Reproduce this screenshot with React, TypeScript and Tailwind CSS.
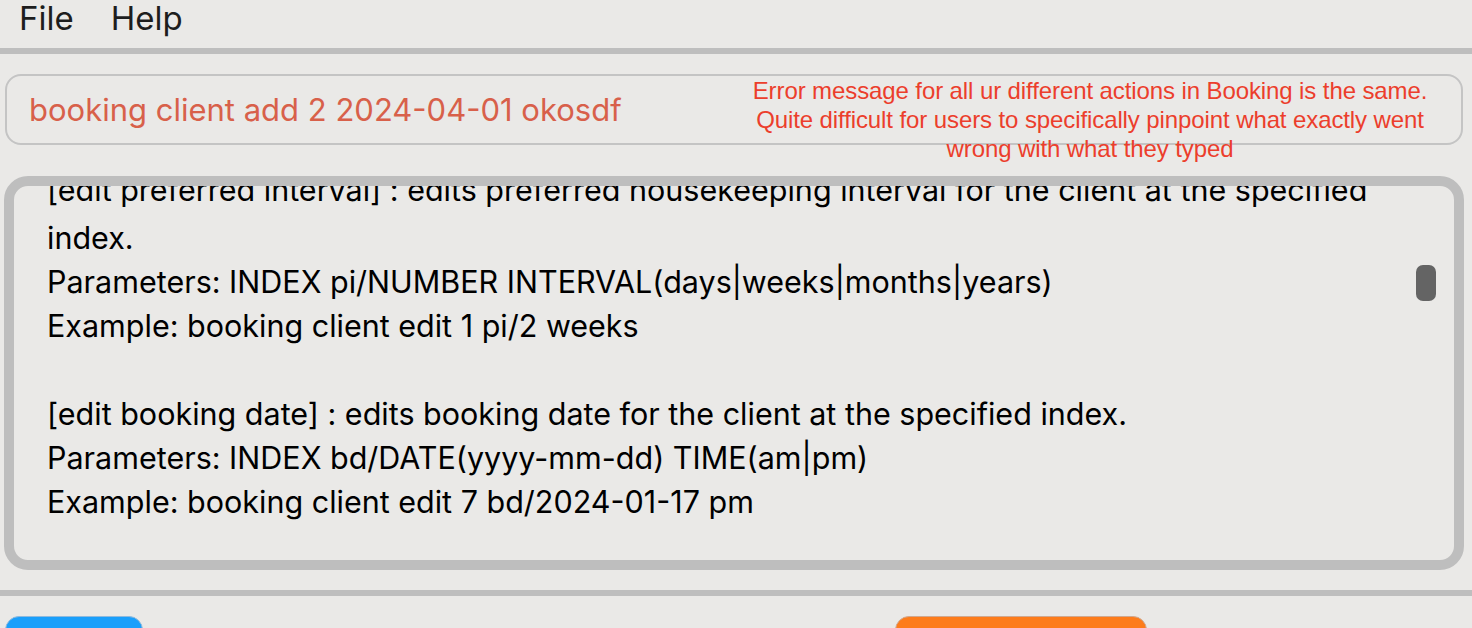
import React from "react";

const resultLines = [
  "[edit preferred interval] : edits preferred housekeeping interval for the client at the specified",
  "index.",
  "Parameters: INDEX pi/NUMBER INTERVAL(days|weeks|months|years)",
  "Example: booking client edit 1 pi/2 weeks",
  "",
  "[edit booking date] : edits booking date for the client at the specified index.",
  "Parameters: INDEX bd/DATE(yyyy-mm-dd) TIME(am|pm)",
  "Example: booking client edit 7 bd/2024-01-17 pm",
];

export default function App() {
  return (
    <div className="flex h-[628px] w-[1472px] flex-col overflow-hidden bg-[#eae9e7] font-['Inter',sans-serif] text-black">
      {/* menu bar */}
      <div className="flex h-[48px] shrink-0 items-start gap-[37px] pl-[19px] text-[33px] leading-[36px] text-[#1d1d1d]">
        <span>File</span>
        <span>Help</span>
      </div>
      <div className="h-[6px] shrink-0 bg-[#bebebe]" />

      {/* command box */}
      <div className="shrink-0 pl-[5px] pr-[9px] pt-[20px]">
        <div className="relative h-[71px] rounded-[16px] border-2 border-[#c4c4c4]">
          <div className="pl-[22px] pt-[15px] text-[31px] leading-[38px] text-[#d8604a]">
            booking client add 2 2024-04-01 okosdf
          </div>
          {/* feedback note, spills over the box edge */}
          <div className="absolute left-[683px] top-0 w-[800px] text-center font-['Liberation_Sans',Arial,sans-serif] text-[24px] leading-[29px] tracking-[-0.1px] text-[#ec3e2c]">
            Error message for all ur different actions in Booking is the same.
            <br />
            Quite difficult for users to specifically pinpoint what exactly went
            <br />
            wrong with what they typed
          </div>
        </div>
      </div>

      {/* result display */}
      <div className="shrink-0 pl-[4px] pr-[8px] pt-[31px]">
        <div className="relative h-[394px] overflow-hidden rounded-[24px] border-[10px] border-[#bebebe]">
          <div className="-mt-[14px] pl-[33px] text-[30.5px] leading-[44px]">
            {resultLines.map((line, i) => (
              <div key={i} className={`h-[44px] whitespace-nowrap ${i === 0 ? "relative -top-[4px]" : ""}`}>
                {line}
              </div>
            ))}
          </div>
          <div className="absolute right-[18px] top-[79px] h-[36px] w-[20px] rounded-[7px] bg-[#646464]" />
        </div>
      </div>

      <div className="mt-[20px] h-[6px] shrink-0 bg-[#bebebe]" />

      {/* tab buttons */}
      <div className="mt-[20px] flex shrink-0 gap-[752px] pl-[5px]">
        <div className="h-[40px] w-[138px] rounded-[14px] border border-[#8fb9dc] bg-[#1a9ffb] pl-[21px] pt-[8px] text-[30px] leading-[36px]">
          Clients
        </div>
        <div className="h-[40px] w-[252px] rounded-[14px] border border-[#d0a890] bg-[#fd7c1b] pl-[21px] pt-[8px] text-[30px] leading-[36px]">
          Housekeeping
        </div>
      </div>
    </div>
  );
}
